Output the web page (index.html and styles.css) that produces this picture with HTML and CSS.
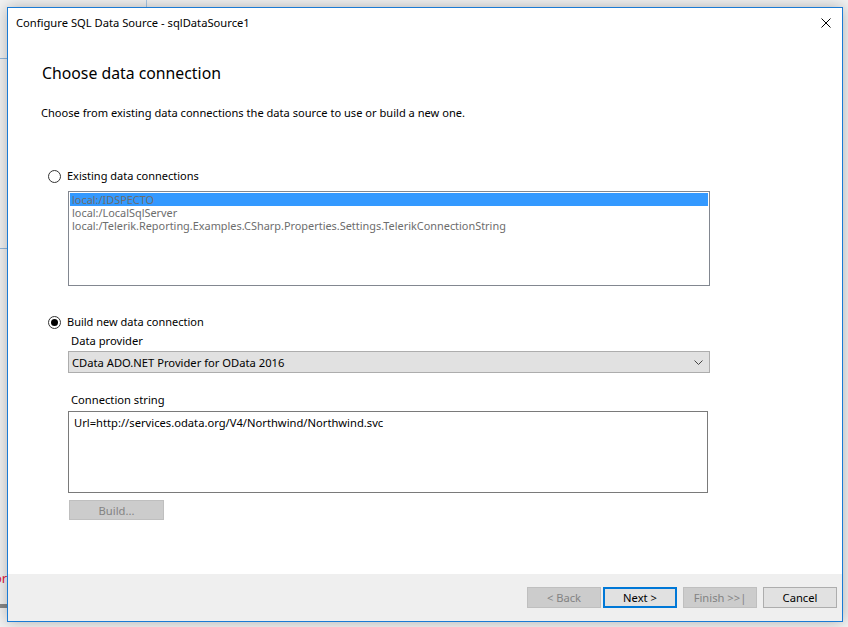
FILE: index.html
```html
<!DOCTYPE html>
<html lang="en">
<head>
  <meta charset="UTF-8">
  <title>Configure SQL Data Source</title>
  <link rel="stylesheet" href="styles.css">
</head>
<body>
  <!-- Desktop behind the dialog -->
  <div class="backdrop">
    <span class="bg-line-v"></span>
    <span class="bg-line-h1"></span>
    <span class="bg-line-h2"></span>
    <span class="bg-text">or</span>
    <span class="bg-band"></span>
  </div>

  <!-- Dialog -->
  <div class="dialog">
    <div class="titlebar">
      <span class="title">Configure SQL Data Source - sqlDataSource1</span>
      <svg class="close" width="10" height="10" viewBox="0 0 10 10">
        <path d="M0.5 0.5 L9.5 9.5 M9.5 0.5 L0.5 9.5" stroke="#000" stroke-width="1"/>
      </svg>
    </div>

    <div class="content">
      <h1 class="heading">Choose data connection</h1>
      <p class="desc">Choose from existing data connections the data source to use or build a new one.</p>

      <label class="radio-row">
        <span class="radio"></span>
        <span>Existing data connections</span>
      </label>
      <div class="listbox">
        <div class="list-item selected">local:/IDSPECTO</div>
        <div class="list-item">local:/LocalSqlServer</div>
        <div class="list-item">local:/Telerik.Reporting.Examples.CSharp.Properties.Settings.TelerikConnectionString</div>
      </div>

      <label class="radio-row second">
        <span class="radio checked"></span>
        <span>Build new data connection</span>
      </label>
      <div class="field-label">Data provider</div>
      <div class="combo">
        <span>CData ADO.NET Provider for OData 2016</span>
        <svg width="9" height="5" viewBox="0 0 9 5">
          <path d="M0.5 0.5 L4.5 4.5 L8.5 0.5" fill="none" stroke="#444" stroke-width="1"/>
        </svg>
      </div>
      <div class="field-label conn">Connection string</div>
      <div class="textbox">Url=http://services.odata.org/V4/Northwind/Northwind.svc</div>
      <button class="btn build" disabled>Build...</button>
    </div>

    <div class="footer">
      <button class="btn" disabled>&lt; Back</button>
      <button class="btn primary">Next &gt;</button>
      <button class="btn finish" disabled>Finish &gt;&gt;|</button>
      <button class="btn">Cancel</button>
    </div>
  </div>
</body>
</html>
```

FILE: styles.css
```css
body {
  margin: 0;
  padding: 7px 0 0 7px;
  background-color: #f2f2f2;
  font-family: 'Noto Sans', 'Open Sans', sans-serif;
  font-size: 11.2px;
  color: #000;
  height: 627px;
  box-sizing: border-box;
  overflow: hidden;
}

.backdrop {
  position: absolute;
  top: 0;
  left: 0;
  width: 848px;
  height: 627px;
  z-index: 0;
}

.bg-line-v {
  position: absolute;
  left: 146px;
  top: 0;
  width: 1px;
  height: 7px;
  background-color: #a9c8e6;
}

.bg-line-h1,
.bg-line-h2 {
  position: absolute;
  left: 0;
  width: 7px;
  height: 1px;
  background-color: #8fb6dc;
}

.bg-line-h1 { top: 58px; }
.bg-line-h2 { top: 248px; }

.bg-band {
  position: absolute;
  left: 0;
  top: 604px;
  width: 7px;
  height: 4px;
  background-color: #888;
}

.bg-text {
  position: absolute;
  left: -6px;
  top: 569px;
  color: #e0203c;
  font-size: 13px;
}

.dialog {
  position: relative;
  z-index: 1;
  width: 834px;
  height: 613px;
  border: 1px solid #1a7ad4;
  background-color: #fff;
  box-shadow: 0 0 14px rgba(0, 0, 0, 0.28);
  display: flex;
  flex-direction: column;
}

.titlebar {
  height: 29px;
  display: flex;
  align-items: center;
  justify-content: space-between;
  padding: 0 11px 0 8px;
}

.close {
  display: block;
}

.content {
  flex: 1;
  padding-left: 34px;
}

.heading {
  margin: 26px 0 0;
  font-size: 15.8px;
  font-weight: normal;
  line-height: 20px;
}

.desc {
  margin: 22px 0 0 -1px;
  line-height: 16px;
  font-size: 11.1px;
}

.radio-row {
  display: flex;
  align-items: center;
  gap: 6px;
  margin: 47px 0 0 6px;
  line-height: 16px;
  font-size: 11px;
}

.radio-row.second {
  margin-top: 28px;
}

.radio {
  width: 11px;
  height: 11px;
  border: 1px solid #333;
  border-radius: 50%;
  background-color: #fff;
  position: relative;
}

.radio.checked::after {
  content: '';
  position: absolute;
  top: 2px;
  left: 2px;
  width: 7px;
  height: 7px;
  border-radius: 50%;
  background-color: #000;
}

.listbox {
  margin: 7px 0 0 26px;
  width: 638px;
  height: 91px;
  border: 1px solid #828790;
  padding: 1px;
  color: #6d6d6d;
}

.list-item {
  height: 13px;
  line-height: 13px;
  padding-left: 2px;
  font-size: 10.9px;
  white-space: nowrap;
}

.list-item.selected {
  background-color: #3399ff;
}

.field-label {
  margin: 3px 0 0 29px;
  line-height: 16px;
}

.field-label.conn {
  margin-top: 19px;
}

.combo {
  margin: 2px 0 0 26px;
  width: 631px;
  height: 20px;
  border: 1px solid #adadad;
  background-color: #e1e1e1;
  display: flex;
  align-items: center;
  justify-content: space-between;
  padding: 0 6px 0 3px;
}

.textbox {
  margin: 3px 0 0 26px;
  width: 633px;
  height: 74px;
  border: 1px solid #7a7a7a;
  padding: 3px 0 3px 5px;
  line-height: 16px;
}

.btn {
  width: 74px;
  height: 21px;
  padding: 0;
  font-family: inherit;
  font-size: 11.2px;
  background-color: #e1e1e1;
  border: 1px solid #adadad;
  color: #000;
}

.btn:disabled {
  background-color: #cccccc;
  border-color: #bfbfbf;
  color: #838383;
}

.btn.build {
  display: block;
  width: 95px;
  height: 20px;
  margin: 7px 0 0 27px;
}

.footer {
  height: 47px;
  background-color: #efefef;
  display: flex;
  justify-content: flex-end;
  align-items: flex-start;
  padding: 13px 5px 0 0;
  box-sizing: border-box;
  gap: 6px;
}

.btn.primary {
  border: 2px solid #0078d7;
  margin-left: -4px;
}
```
